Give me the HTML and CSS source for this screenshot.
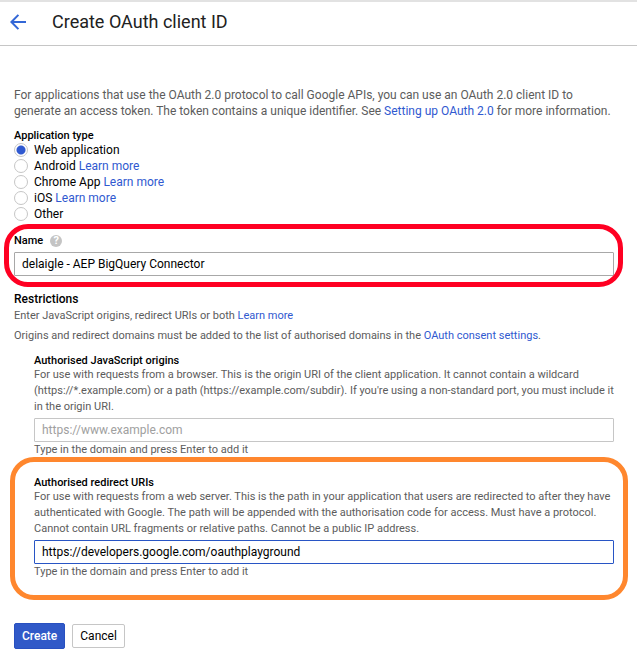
FILE: index.html
```html
<!DOCTYPE html>
<html lang="en-GB">
<head>
<meta charset="utf-8">
<meta name="viewport" content="width=device-width, initial-scale=1">
<title>Create OAuth client ID</title>
<link rel="stylesheet" href="styles.css">
</head>
<body>
<header class="header">
  <a class="back" href="#" aria-label="Back">
    <svg width="16" height="16" viewBox="0 0 16 16" fill="none" stroke="#3367d6" stroke-width="2" aria-hidden="true"><path d="M16 8H1.8M8.4 .9L1.4 8l7 7.1"/></svg>
  </a>
  <h1 class="title">Create OAuth client ID</h1>
</header>
<main class="main">
  <form>
    <p class="intro">For applications that use the OAuth 2.0 protocol to call Google APIs, you can use an OAuth 2.0 client ID to generate an access token. The token contains a unique identifier. See <a href="#">Setting up OAuth 2.0</a> for more information.</p>

    <fieldset class="types">
      <legend class="label">Application type</legend>
      <div class="option"><input type="radio" name="type" id="web" checked><label for="web">Web application</label></div>
      <div class="option"><input type="radio" name="type" id="android"><label for="android">Android</label><a href="#">Learn more</a></div>
      <div class="option"><input type="radio" name="type" id="chrome"><label for="chrome">Chrome App</label><a href="#">Learn more</a></div>
      <div class="option"><input type="radio" name="type" id="ios"><label for="ios">iOS</label><a href="#">Learn more</a></div>
      <div class="option"><input type="radio" name="type" id="other"><label for="other">Other</label></div>
    </fieldset>

    <section class="name callout callout-red">
      <div class="name-head">
        <label class="label" for="name">Name</label>
        <span class="help">?</span>
      </div>
      <input class="field field-dark" type="text" id="name" value="delaigle - AEP BigQuery Connector">
    </section>

    <section class="restrictions">
      <h2 class="heading">Restrictions</h2>
      <p class="note">Enter JavaScript origins, redirect URIs or both <a href="#">Learn more</a></p>
      <p class="note">Origins and redirect domains must be added to the list of authorised domains in the <a href="#">OAuth consent settings</a>.</p>
    </section>

    <section class="group">
      <label class="label" for="origins">Authorised JavaScript origins</label>
      <p class="hint">For use with requests from a browser. This is the origin URI of the client application. It cannot contain a wildcard (https://*.example.com) or a path (https://example.com/subdir). If you're using a non-standard port, you must include it in the origin URI.</p>
      <input class="field" type="text" id="origins" placeholder="https://www.example.com">
      <p class="hint">Type in the domain and press Enter to add it</p>
    </section>

    <section class="group callout callout-orange">
      <label class="label" for="redirects">Authorised redirect URIs</label>
      <p class="hint">For use with requests from a web server. This is the path in your application that users are redirected to after they have authenticated with Google. The path will be appended with the authorisation code for access. Must have a protocol. Cannot contain URL fragments or relative paths. Cannot be a public IP address.</p>
      <input class="field field-active" type="text" id="redirects" value="https://developers.google.com/oauthplayground">
      <p class="hint">Type in the domain and press Enter to add it</p>
    </section>

    <div class="actions">
      <button class="button primary" type="submit">Create</button>
      <button class="button" type="button">Cancel</button>
    </div>
  </form>
</main>
</body>
</html>
```
FILE: styles.css
```css
* {
  box-sizing: border-box;
}

body {
  margin: 0;
  background: #fff;
  color: #000;
  font: 12px/16px Roboto, "Liberation Sans", sans-serif;
}

h1, h2, p {
  margin: 0;
}

a {
  color: #3059d0;
  text-decoration: none;
}

.header {
  display: flex;
  align-items: center;
  gap: 26px;
  height: 46px;
  padding: 0 10px 4px;
  border-top: 2px solid #e2e2e2;
  border-bottom: 1px solid #c6c6c6;
}

.back {
  display: flex;
}

.title {
  font-size: 18px;
  line-height: 24px;
  font-weight: 400;
  color: #212121;
}

.main {
  padding: 41px 23px 5px 14px;
}

.intro {
  color: #5c5c5c;
}

.types {
  margin: 11px 0 0;
  padding: 0;
  border: 0;
}

.label {
  display: block;
  padding: 0;
  font-size: 11px;
  line-height: 12px;
  font-weight: 500;
}

.option {
  display: flex;
  align-items: center;
  gap: 3px;
  height: 16px;
}

.option input {
  appearance: none;
  flex: none;
  width: 14px;
  height: 14px;
  margin: 0 3px 0 0;
  border: 1px solid #c6c6c6;
  border-radius: 50%;
  background: #fff;
}

.option input:checked {
  background: radial-gradient(circle, #3059d0 4px, #fff 5px);
}

.callout {
  position: relative;
}

.callout::after {
  content: "";
  position: absolute;
  border: 5px solid;
  border-radius: 24px;
  pointer-events: none;
}

.callout-red::after {
  inset: -11px -9px -11px -10px;
  border-color: #ff0022;
}

.callout-orange::after {
  inset: -20px -14px -20px -24px;
  border-color: #ff872e;
}

.name {
  margin-top: 13px;
}

.name-head {
  display: flex;
  align-items: center;
  gap: 7px;
  margin-bottom: 5px;
}

.help {
  width: 12px;
  height: 12px;
  border-radius: 50%;
  background: #c4c4c4;
  color: #fff;
  font-size: 11px;
  line-height: 12px;
  font-weight: 700;
  text-align: center;
}

.field {
  display: block;
  width: 100%;
  height: 24px;
  padding: 0 7px;
  border: 1px solid #c6c6c6;
  border-radius: 1px;
  background: #fff;
  color: #000;
  font: inherit;
}

.field::placeholder {
  color: #a0a0a0;
  opacity: 1;
}

.field-dark {
  border-color: #a8a8a8;
}

.field-active {
  border-color: #2855c5;
}

.restrictions {
  margin-top: 15px;
}

.heading {
  margin-bottom: 1px;
  font-size: 12px;
  line-height: 16px;
  font-weight: 500;
}

.note,
.hint {
  color: #5c5c5c;
  font-size: 11px;
  line-height: 16px;
}

.note + .note {
  margin-top: 4px;
}

.group {
  margin: 11px 0 0 20px;
}

.group .field {
  margin-top: 3px;
}

.callout-orange {
  margin-top: 19px;
}

.actions {
  display: flex;
  align-items: center;
  gap: 7px;
  margin-top: 43px;
}

.button {
  height: 24px;
  padding: 0 7px;
  border: 1px solid #c6c6c6;
  border-radius: 2px;
  background: #fff;
  color: #000;
  font: inherit;
}

.primary {
  height: 26px;
  border-color: #2850c0;
  background: #3059c8;
  color: #fff;
  font-weight: 500;
}
```
